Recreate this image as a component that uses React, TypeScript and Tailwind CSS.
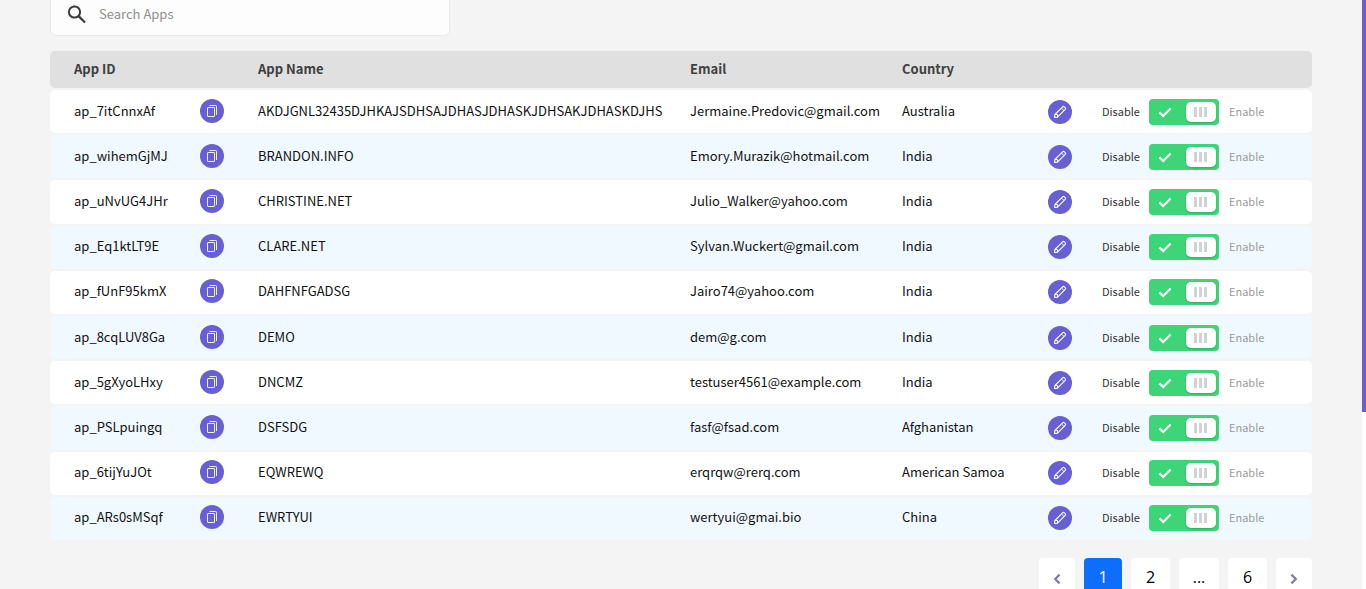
import { useState } from "react";

type AppRow = { id: string; name: string; email: string; country: string };

const apps: AppRow[] = [
  { id: "ap_7itCnnxAf", name: "AKDJGNL32435DJHKAJSDHSAJDHASJDHASKJDHSAKJDHASKDJHS", email: "Jermaine.Predovic@gmail.com", country: "Australia" },
  { id: "ap_wihemGjMJ", name: "BRANDON.INFO", email: "Emory.Murazik@hotmail.com", country: "India" },
  { id: "ap_uNvUG4JHr", name: "CHRISTINE.NET", email: "Julio_Walker@yahoo.com", country: "India" },
  { id: "ap_Eq1ktLT9E", name: "CLARE.NET", email: "Sylvan.Wuckert@gmail.com", country: "India" },
  { id: "ap_fUnF95kmX", name: "DAHFNFGADSG", email: "Jairo74@yahoo.com", country: "India" },
  { id: "ap_8cqLUV8Ga", name: "DEMO", email: "dem@g.com", country: "India" },
  { id: "ap_5gXyoLHxy", name: "DNCMZ", email: "testuser4561@example.com", country: "India" },
  { id: "ap_PSLpuingq", name: "DSFSDG", email: "fasf@fsad.com", country: "Afghanistan" },
  { id: "ap_6tijYuJOt", name: "EQWREWQ", email: "erqrqw@rerq.com", country: "American Samoa" },
  { id: "ap_ARs0sMSqf", name: "EWRTYUI", email: "wertyui@gmai.bio", country: "China" },
];

function SearchIcon() {
  return (
    <svg viewBox="0 0 20 20" className="size-5 shrink-0" fill="none" stroke="#3c3c3c" aria-hidden="true">
      <circle cx="7.5" cy="8" r="5.6" strokeWidth="2" />
      <path d="M11.6 12.1 18 18.5" strokeWidth="2.2" />
    </svg>
  );
}

function CopyIcon() {
  return (
    <svg viewBox="0 0 12 12" className="size-3" fill="none" stroke="white" strokeWidth="0.9" strokeLinejoin="round" aria-hidden="true">
      <rect x="1.5" y="2.5" width="7" height="9" rx="0.5" />
      <path d="M3.5 0.5h6.2a0.8 0.8 0 0 1 0.8 0.8v8.7" />
    </svg>
  );
}

function PencilIcon() {
  return (
    <svg viewBox="0 0 14 14" className="size-3.5" fill="none" stroke="white" strokeWidth="1.1" strokeLinejoin="round" aria-hidden="true">
      <path d="M1.5 12.5 1.9 9.5 9.6 1.8a1.3 1.3 0 0 1 1.8 0l0.8 0.8a1.3 1.3 0 0 1 0 1.8L4.5 12.1Z" />
      <path d="M8.4 3 11 5.6M1.9 9.5h2.6v2.6" strokeWidth="0.9" />
    </svg>
  );
}

function StatusSwitch({ app }: { app: AppRow }) {
  const [enabled, setEnabled] = useState(true);
  return (
    <label className="flex items-center text-[11px] leading-4">
      <span className="pb-0.5 text-[#333]">Disable</span>
      <span className={`relative mr-2.5 ml-[9px] flex h-[26px] w-[70px] items-center rounded-[4px] px-[3px] ${enabled ? "justify-end bg-[#3dd578]" : "justify-start bg-[#c4c4c4]"}`}>
        <input
          type="checkbox"
          role="switch"
          aria-label={`Enable ${app.name}`}
          checked={enabled}
          onChange={(e) => setEnabled(e.target.checked)}
          className="absolute inset-0 cursor-pointer appearance-none"
        />
        {enabled && (
          <svg viewBox="0 0 14 12" className="mr-3.5 h-3 w-3.5" fill="none" stroke="white" strokeWidth="2.2" aria-hidden="true">
            <path d="M1.5 6.4 5.2 10 12.6 2.4" />
          </svg>
        )}
        <span className="flex h-5 w-[30px] items-center justify-center gap-0.5 rounded-[5px] bg-white shadow-[0_1px_2px_rgba(0,0,0,0.2)]">
          <i className="h-2.5 w-[3px] bg-[#d0d3d6]" />
          <i className="h-2.5 w-[3px] bg-[#d0d3d6]" />
          <i className="h-2.5 w-[3px] bg-[#d0d3d6]" />
        </span>
      </span>
      <span className="pb-0.5 text-[#9b9b9b]">Enable</span>
    </label>
  );
}

function Pagination() {
  const [page, setPage] = useState(1);
  const tile = "h-[38px] rounded-[4px] text-base leading-6";
  const active = "bg-[#0d6efd] text-white";
  const idle = "bg-white text-black";
  return (
    <nav aria-label="Pages" className="mt-4 flex justify-end gap-[9px] font-['Open_Sans',sans-serif]">
      <button aria-label="Previous page" onClick={() => setPage(Math.max(1, page - 1))} className={`${tile} ${idle} flex w-9 items-center justify-center pt-1`}>
        <svg viewBox="0 0 8 12" className="h-3 w-2" fill="none" stroke="#8379ad" strokeWidth="2.2" aria-hidden="true">
          <path d="M6.6 1.6 2.2 6l4.4 4.4" />
        </svg>
      </button>
      <button onClick={() => setPage(1)} className={`${tile} ${page === 1 ? active : idle} w-[38px]`}>1</button>
      <button onClick={() => setPage(2)} className={`${tile} ${page === 2 ? active : idle} w-[39px]`}>2</button>
      <span className={`${tile} ${idle} flex w-10 items-center justify-center`}>...</span>
      <button onClick={() => setPage(6)} className={`${tile} ${page === 6 ? active : idle} w-[39px]`}>6</button>
      <button aria-label="Next page" onClick={() => setPage(Math.min(6, page + 1))} className={`${tile} ${idle} flex w-9 items-center justify-center pt-1`}>
        <svg viewBox="0 0 8 12" className="h-3 w-2" fill="none" stroke="#8379ad" strokeWidth="2.2" aria-hidden="true">
          <path d="M1.4 1.6 5.8 6l-4.4 4.4" />
        </svg>
      </button>
    </nav>
  );
}

export default function App() {
  return (
    <div className="flex h-screen overflow-hidden bg-[#f4f4f4] font-['Noto_Sans_CJK_SC',sans-serif] text-[13px] leading-5 text-[#111]">
      <main className="min-w-0 flex-1 px-[50px]">
        <label className="-mt-2 flex h-11 w-[400px] items-center gap-3 rounded-[6px] border border-[#e8e8e8] bg-[#fdfdfd] px-4">
          <SearchIcon />
          <input type="search" aria-label="Search Apps" placeholder="Search Apps" className="min-w-0 flex-1 bg-transparent outline-none placeholder:text-[#8f8f8f]" />
        </label>

        <table className="mt-[13px] h-[493px] w-full table-fixed border-separate border-spacing-x-0 border-spacing-y-0.5">
          <colgroup>
            <col className="w-[150px]" />
            <col className="w-[34px]" />
            <col />
            <col className="w-[212px]" />
            <col className="w-[146px]" />
            <col className="w-[54px]" />
            <col className="w-[234px]" />
          </colgroup>
          <thead>
            <tr className="h-[37px] bg-[#e0e0e0] text-left text-[#3f3f3f] *:p-0 *:pb-0.5 *:pl-6 *:font-bold">
              <th className="rounded-l-[5px]">App ID</th>
              <td />
              <th>App Name</th>
              <th>Email</th>
              <th>Country</th>
              <td />
              <td className="rounded-r-[5px]" />
            </tr>
          </thead>
          <tbody>
            {apps.map((app) => (
              <tr key={app.id} className="bg-white even:bg-[#f0f9ff] *:p-0 *:pl-6">
                <td className="rounded-l-[5px] pb-0.5!">{app.id}</td>
                <td className="pb-0.5! pl-0!">
                  <button aria-label={`Copy ${app.id}`} className="flex size-6 items-center justify-center rounded-full bg-[#685fd2]">
                    <CopyIcon />
                  </button>
                </td>
                <td className="pb-0.5!">{app.name}</td>
                <td className="pb-0.5!">{app.email}</td>
                <td className="pb-0.5!">{app.country}</td>
                <td>
                  <button aria-label={`Edit ${app.id}`} className="flex size-6 items-center justify-center rounded-full bg-[#685fd2]">
                    <PencilIcon />
                  </button>
                </td>
                <td className="rounded-r-[5px]">
                  <StatusSwitch app={app} />
                </td>
              </tr>
            ))}
          </tbody>
        </table>

        <Pagination />
      </main>
      <div className="w-1 bg-white">
        <div className="h-[70%] bg-[#685fd2]" />
      </div>
    </div>
  );
}
